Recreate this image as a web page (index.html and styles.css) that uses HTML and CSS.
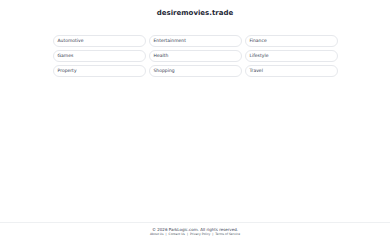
FILE: index.html
```html
<!DOCTYPE html>
<html lang="en">
<head>
  <meta charset="UTF-8">
  <meta name="viewport" content="width=device-width, initial-scale=1.0">
  <title>desiremovies.trade</title>
  <link rel="stylesheet" href="styles.css">
</head>
<body>
  <div class="page">
    <main class="content">
      <h1 class="domain">desiremovies.trade</h1>
      <div class="links">
        <a class="pill" href="#">Automotive</a>
        <a class="pill" href="#">Entertainment</a>
        <a class="pill" href="#">Finance</a>
        <a class="pill" href="#">Games</a>
        <a class="pill" href="#">Health</a>
        <a class="pill" href="#">Lifestyle</a>
        <a class="pill" href="#">Property</a>
        <a class="pill" href="#">Shopping</a>
        <a class="pill" href="#">Travel</a>
      </div>
    </main>
    <footer class="footer">
      <p class="copy">&copy; 2026 ParkLogic.com. All rights reserved.</p>
      <p class="footer-links">
        <a href="#">About Us</a> <span class="sep">|</span>
        <a href="#">Contact Us</a> <span class="sep">|</span>
        <a href="#">Privacy Policy</a> <span class="sep">|</span>
        <a href="#">Terms of Service</a>
      </p>
    </footer>
  </div>
</body>
</html>
```

FILE: styles.css
```css
html, body {
  margin: 0;
  padding: 0;
  background: #ffffff;
  font-family: "DejaVu Sans", "Liberation Sans", sans-serif;
}

.page {
  min-height: 240px;
  display: flex;
  flex-direction: column;
}

.content {
  flex: 1;
  display: flex;
  flex-direction: column;
  align-items: center;
  padding-top: 8px;
}

.domain {
  margin: 0 0 17px;
  font-size: 7px;
  font-weight: bold;
  color: #1f2937;
  line-height: 10px;
}

.links {
  display: grid;
  grid-template-columns: repeat(3, 93px);
  gap: 3px 3px;
}

.pill {
  display: block;
  height: 10px;
  line-height: 10px;
  padding: 0 4px;
  border: 1px solid #e6e8ec;
  border-radius: 6px;
  font-size: 4.5px;
  color: #374151;
  text-decoration: none;
  background: #fff;
}

.footer {
  border-top: 1px solid #eef0f2;
  text-align: center;
  padding: 4px 0 3px;
}

.footer p {
  margin: 0;
}

.copy {
  font-size: 4px;
  line-height: 5px;
  color: #374151;
}

.footer-links {
  font-size: 3px;
  line-height: 5px;
  color: #4b5563;
}

.footer-links a {
  color: #4b5563;
  text-decoration: none;
}

.sep {
  margin: 0 1px;
}
```
